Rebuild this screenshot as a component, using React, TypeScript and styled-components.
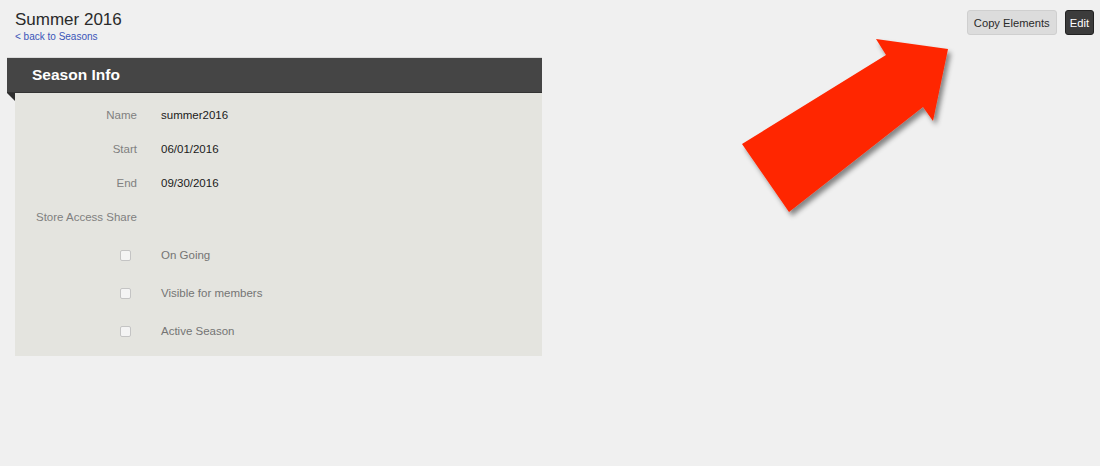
import React from 'react'
import styled, { createGlobalStyle } from 'styled-components'

const GlobalStyle = createGlobalStyle`
  html, body {
    margin: 0;
    padding: 0;
    background: #f0f0f0;
    font-family: 'Liberation Sans', Arial, sans-serif;
  }
`

const Page = styled.div`
  position: relative;
  width: 1100px;
  height: 466px;
  overflow: hidden;
  background: #f0f0f0;
`

const TopBar = styled.div`
  display: flex;
  justify-content: space-between;
  align-items: flex-start;
  padding: 10px 6px 0 15px;
`

const TitleBlock = styled.div`
  display: flex;
  flex-direction: column;
`

const Title = styled.h1`
  margin: 0;
  font-size: 17px;
  font-weight: normal;
  line-height: 20px;
  color: #2a2a2a;
`

const BackLink = styled.a`
  font-size: 10px;
  line-height: 13px;
  color: #3a55b8;
  text-decoration: none;
  cursor: pointer;
`

const Actions = styled.div`
  display: flex;
  gap: 8px;
`

const Button = styled.button<{ $dark?: boolean }>`
  height: 25px;
  padding: 0 ${({ $dark }) => ($dark ? 4 : 6)}px;
  font-family: 'Liberation Sans', Arial, sans-serif;
  font-size: 11.2px;
  border-radius: 3px;
  border: 1px solid ${({ $dark }) => ($dark ? '#222' : '#cfcfcf')};
  background: ${({ $dark }) => ($dark ? '#3c3c3c' : '#dcdcdc')};
  color: ${({ $dark }) => ($dark ? '#fff' : '#2a2a2a')};
  cursor: pointer;
`

const Panel = styled.section`
  width: 535px;
  margin: 14px 0 0 7px;
`

const PanelHeader = styled.div`
  position: relative;
  height: 34px;
  display: flex;
  align-items: center;
  padding-left: 25px;
  background: #454545;
  border-top: 1px solid #dadada;
  border-bottom: 1px solid #333;
  color: #fff;
  font-size: 15.5px;
  font-weight: bold;

  &::after {
    content: '';
    position: absolute;
    left: 0;
    top: 35px;
    border-top: 8px solid #2e2e2e;
    border-left: 8px solid transparent;
  }
`

const PanelBody = styled.div`
  margin-left: 8px;
  padding: 5px 0 6px;
  background: #e4e4df;
`

const Row = styled.div<{ $h: number }>`
  display: grid;
  grid-template-columns: 122px 1fr;
  column-gap: 24px;
  align-items: center;
  height: ${({ $h }) => $h}px;
  font-size: 11.5px;
`

const Label = styled.div`
  text-align: right;
  color: #808080;
`

const Value = styled.div<{ $muted?: boolean }>`
  color: ${({ $muted }) => ($muted ? '#747474' : '#1a1a1a')};
`

const CheckCell = styled.div`
  display: flex;
  justify-content: flex-end;
  padding-right: 6px;
`

const Check = styled.span`
  width: 9px;
  height: 9px;
  border: 1px solid #c4c4c4;
  border-radius: 2px;
  background: #f4f4f4;
`

const Spacer = styled.div`
  height: 2px;
`

const ArrowSvg = styled.svg`
  position: absolute;
  left: 0;
  top: 0;
  pointer-events: none;
`

const fields = [
  { label: 'Name', value: 'summer2016' },
  { label: 'Start', value: '06/01/2016' },
  { label: 'End', value: '09/30/2016' },
  { label: 'Store Access Share', value: '' },
]

const flags = ['On Going', 'Visible for members', 'Active Season']

export default function App() {
  return (
    <Page>
      <GlobalStyle />
      <TopBar>
        <TitleBlock>
          <Title>Summer 2016</Title>
          <BackLink>&lt; back to Seasons</BackLink>
        </TitleBlock>
        <Actions>
          <Button>Copy Elements</Button>
          <Button $dark>Edit</Button>
        </Actions>
      </TopBar>

      <Panel>
        <PanelHeader>Season Info</PanelHeader>
        <PanelBody>
          {fields.map((f) => (
            <Row key={f.label} $h={34}>
              <Label>{f.label}</Label>
              <Value>{f.value}</Value>
            </Row>
          ))}
          <Spacer />
          {flags.map((f) => (
            <Row key={f} $h={38}>
              <CheckCell>
                <Check />
              </CheckCell>
              <Value $muted>{f}</Value>
            </Row>
          ))}
        </PanelBody>
      </Panel>

      {/* the red call-out arrow over the page */}
      <ArrowSvg width="1100" height="466" viewBox="0 0 1100 466">
        <defs>
          <filter id="arrowShadow" x="-20%" y="-20%" width="140%" height="140%">
            <feDropShadow dx="3" dy="4" stdDeviation="2.5" floodColor="#000" floodOpacity="0.45" />
          </filter>
        </defs>
        <polygon
          points="742,144 789,212 923,107 933,121 948,49 876,39 886,55"
          fill="#ff2600"
          filter="url(#arrowShadow)"
        />
      </ArrowSvg>
    </Page>
  )
}
